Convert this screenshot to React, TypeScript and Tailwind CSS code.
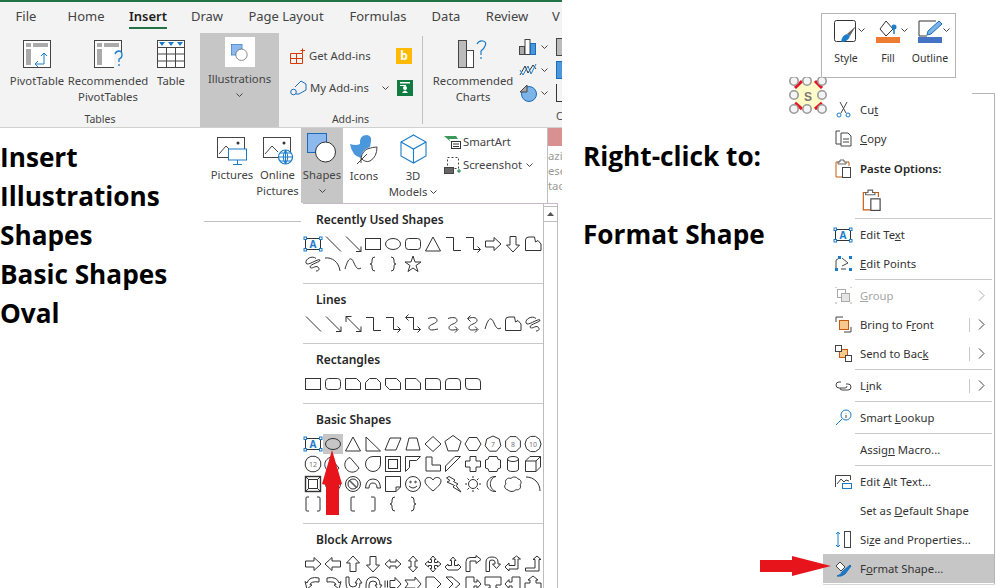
import type { ReactNode } from 'react';

const polygon = (n: number, r = 7.5) =>
  Array.from({ length: n }, (_, i) => {
    const a = (Math.PI * 2 * i) / n - Math.PI / 2 - (n % 2 ? 0 : Math.PI / n);
    return `${(10 + r * Math.cos(a)).toFixed(1)},${(10 + r * Math.sin(a)).toFixed(1)}`;
  }).join(' ');

const numbered = (n: number, label: string) => (
  <>
    <polygon points={polygon(n, 8)} />
    <text x="10" y="12.5" fontSize="7" textAnchor="middle" fill="#777" stroke="none" fontFamily="Noto Sans">{label}</text>
  </>
);

const arrowHead = (x: number, y: number, dir: 'r' | 'l' | 'd' | 'u' | 'dr') => {
  if (dir === 'r') return <path d={`M${x - 3} ${y - 3}L${x} ${y}L${x - 3} ${y + 3}`} />;
  if (dir === 'l') return <path d={`M${x + 3} ${y - 3}L${x} ${y}L${x + 3} ${y + 3}`} />;
  if (dir === 'd') return <path d={`M${x - 3} ${y - 3}L${x} ${y}L${x + 3} ${y - 3}`} />;
  if (dir === 'u') return <path d={`M${x - 3} ${y + 3}L${x} ${y}L${x + 3} ${y + 3}`} />;
  return <path d={`M${x - 5} ${y}H${x}V${y - 5}`} />;
};

// gallery drawings, all in a 20x20 box
const shapes: Record<string, ReactNode> = {
  textbox: (
    <>
      <rect x="2.5" y="4.5" width="15" height="11" stroke="#333" />
      <text x="10" y="14" fontSize="10" fontWeight="700" textAnchor="middle" fill="#1b7cc9" stroke="none" fontFamily="Noto Sans">A</text>
      <g fill="#fff" stroke="#1b7cc9">
        <rect x="1" y="3" width="2.5" height="2.5" />
        <rect x="16.5" y="3" width="2.5" height="2.5" />
        <rect x="1" y="14.5" width="2.5" height="2.5" />
        <rect x="16.5" y="14.5" width="2.5" height="2.5" />
      </g>
    </>
  ),
  line: <path d="M3 2.5L18 17.5" />,
  arrow: <><path d="M3 2.5L18 17.5" />{arrowHead(18, 17.5, 'dr')}</>,
  dbl: <><path d="M3 2.5L18 17.5" />{arrowHead(18, 17.5, 'dr')}<path d="M3 8V2.5H8.5" /></>,
  rect: <rect x="2.5" y="4.5" width="15" height="11" />,
  oval: <ellipse cx="10" cy="10" rx="7.5" ry="5.5" />,
  round: <rect x="2.5" y="4.5" width="15" height="11" rx="3" />,
  tri: <path d="M10 3L17.5 17H2.5Z" />,
  rtri: <path d="M3 3L17.5 17H3Z" />,
  elbow: <path d="M3 3.5H10.5V16.5H18" />,
  elbowA: <><path d="M3 3.5H10.5V15.5H17" />{arrowHead(17.5, 15.5, 'r')}</>,
  elbowD: <><path d="M3 3.5H10.5V15.5H17" />{arrowHead(17.5, 15.5, 'r')}{arrowHead(2.5, 3.5, 'l')}</>,
  curveZ: <path d="M5 4.5C9 3 14 3 14 6.5S6 10 6 13.5S10 16 15 15" />,
  curveA: <><path d="M5 4.5C9 3 14 3 14 6.5S6 10 6 13.5S10 16 14 15.5" />{arrowHead(15, 15.5, 'r')}</>,
  curveD: <><path d="M5 4.5C9 3 14 3 14 6.5S6 10 6 13.5S10 16 14 15.5" />{arrowHead(15, 15.5, 'r')}{arrowHead(4.5, 4.5, 'l')}</>,
  rarrow: <path d="M2.5 7H11V3.5L18 10L11 16.5V13H2.5Z" />,
  larrow: <path d="M17.5 7H9V3.5L2 10L9 16.5V13H17.5Z" />,
  uarrow: <path d="M7 17.5V9H3.5L10 2L16.5 9H13V17.5Z" />,
  darrow: <path d="M7 2.5V11H3.5L10 18L16.5 11H13V2.5Z" />,
  lrarrow: <path d="M2 10L7 5.5V8H13V5.5L18 10L13 14.5V12H7V14.5Z" />,
  udarrow: <path d="M10 2L14.5 7H12V13H14.5L10 18L5.5 13H8V7H5.5Z" />,
  quad: <path d="M10 2L13 5.5H11.5V8.5H14.5V7L18 10L14.5 13V11.5H11.5V14.5H13L10 18L7 14.5H8.5V11.5H5.5V13L2 10L5.5 7V8.5H8.5V5.5H7Z" />,
  lru: <path d="M10 3L13 6.5H11.5V11.5H15V10L18 13L15 16H5V16L2 13L5 10V11.5H8.5V6.5H7Z" />,
  bent: <path d="M3 17.5V7.5Q3 3.5 7 3.5H13V1.5L18 5.5L13 9.5V7H7V17.5Z" />,
  uturn: <path d="M3 17.5V8Q3 3 9 3T15 8V10H17.5L13.5 14.5L9.5 10H12V8Q12 6 9 6T6.5 8V17.5Z" />,
  leftup: <path d="M2 13L6 9V11.5H12V5H9.5L13.5 2L17.5 5H15V15H6V17Z" />,
  bentup: <path d="M2.5 14H12V5.5H10L14 2L18 5.5H16V17H2.5Z" />,
  curveL: <path d="M16 4Q6 2 4 9L2 7.5L4 15L9 11L7 10.5Q8 7 16 8Z" />,
  curveR: <path d="M4 4Q14 2 16 9L18 7.5L16 15L11 11L13 10.5Q12 7 4 8Z" />,
  curveU: <path d="M3 3V9Q3 17 10 17T17 9L19 9L15.5 4L12 9H14Q14 13 10 13T6 9V3Z" />,
  curveD2: <path d="M3 17V11Q3 3 10 3T17 11L19 11L15.5 16L12 11H14Q14 7 10 7T6 11V17Z" />,
  striped: <path d="M2 6.5V13.5M4.5 6.5V13.5M7 6.5H12V3.5L18 10L12 16.5V13.5H7Z" />,
  notched: <path d="M2 6H12V3L18 10L12 17V14H2L5 10Z" />,
  pentarrow: <path d="M3 3H11L18 10L11 17H3Z" />,
  chevron: <path d="M3 3H9L17 10L9 17H3L10 10Z" />,
  callR: <path d="M3 3H11V8H14V5.5L18 10L14 14.5V12H11V17H3Z" />,
  callD: <path d="M2 3H18V11H13V14H15L10 18L5 14H7V11H2Z" />,
  callL: <path d="M17 3H9V8H6V5.5L2 10L6 14.5V12H9V17H17Z" />,
  callU: <path d="M2 17H18V9H13V6H15L10 2L5 6H7V9H2Z" />,
  snip1: <path d="M2.5 4.5H13.5L17.5 8.5V15.5H2.5Z" />,
  snip2: <path d="M6.5 4.5H13.5L17.5 8.5V15.5H2.5V8.5Z" />,
  snip3: <path d="M2.5 4.5H13.5L17.5 8.5V15.5H6.5L2.5 11.5Z" />,
  snip4: <path d="M2.5 4.5H13L17.5 9V15.5H2.5Z" />,
  rsingle: <path d="M2.5 4.5H14Q17.5 4.5 17.5 8V15.5H2.5Z" />,
  rtop: <path d="M6 4.5H14Q17.5 4.5 17.5 8V15.5H2.5V8Q2.5 4.5 6 4.5Z" />,
  rdiag: <path d="M2.5 4.5H14Q17.5 4.5 17.5 8V15.5H6Q2.5 15.5 2.5 12Z" />,
  freeform: <path d="M2.5 16.5V6Q2.5 3 6 3H11.5L12.5 8L15 6.5L18 10V16.5Z" />,
  scribble: <path d="M13 4.5C9 1 2 5 3 9C4 13 15 4 17 6C18 8 7 10 7 13C8 16 13 11 15 13C17 15 16 17 13 17" />,
  arcCurve: <path d="M2 4C9 3 16 8 17 17" />,
  wave: <path d="M2 15C6 1 9 4 11 9S15 16 18 14" />,
  lbrace: <path d="M12 3Q9 3 9 6V8Q9 10 7 10Q9 10 9 12V14Q9 17 12 17" />,
  rbrace: <path d="M8 3Q11 3 11 6V8Q11 10 13 10Q11 10 11 12V14Q11 17 8 17" />,
  lbracket: <path d="M12 3H9Q8 3 8 4V16Q8 17 9 17H12" />,
  rbracket: <path d="M8 3H11Q12 3 12 4V16Q12 17 11 17H8" />,
  dblbracket: <path d="M6 3H4Q3 3 3 4V16Q3 17 4 17H6M14 3H16Q17 3 17 4V16Q17 17 16 17H14" />,
  star: <path d="M10 2L12 8H18L13 11.5L15 17.5L10 14L5 17.5L7 11.5L2 8H8Z" />,
  para: <path d="M7 4H18L13 16H2Z" />,
  trap: <path d="M6 4H14L17 16H3Z" />,
  diamond: <path d="M10 2.5L18 10L10 17.5L2 10Z" />,
  pentagon: <polygon points={polygon(5, 8.5)} />,
  hexagon: <path d="M6 3.5H14L18 10L14 16.5H6L2 10Z" />,
  n7: numbered(7, '7'),
  n8: numbered(8, '8'),
  n10: numbered(10, '10'),
  n12: numbered(12, '12'),
  chord: <path d="M7 3.5A7.5 7.5 0 1 0 16 14Z" />,
  tear: <path d="M17.5 2.5V10A7.5 7.5 0 1 1 10 2.5Z" />,
  frame: <><rect x="2.5" y="2.5" width="15" height="15" /><rect x="5.5" y="5.5" width="9" height="9" /></>,
  half: <path d="M2.5 17.5V2.5H17.5L13.5 6.5H6.5V13.5Z" />,
  lshape: <path d="M3 3H9V11H17.5V17H3Z" />,
  diag: <path d="M2.5 12L12 2.5H17.5L2.5 17.5Z" />,
  plus: <path d="M7 2.5H13V7H17.5V13H13V17.5H7V13H2.5V7H7Z" />,
  plaque: <path d="M6 2.5H14Q14 6 17.5 6V14Q14 14 14 17.5H6Q6 14 2.5 14V6Q6 6 6 2.5Z" />,
  can: <><path d="M4.5 5V15Q4.5 17.5 10 17.5T15.5 15V5" /><ellipse cx="10" cy="5" rx="5.5" ry="2.5" /></>,
  cube: <path d="M2.5 7L7 2.5H17.5V13L13 17.5H2.5ZM2.5 7H13V17.5M13 7L17.5 2.5" />,
  bevel: <><rect x="2.5" y="2.5" width="15" height="15" strokeWidth="1.4" /><rect x="5.5" y="5.5" width="9" height="9" /><path d="M2.5 2.5L5.5 5.5M17.5 2.5L14.5 5.5M2.5 17.5L5.5 14.5M17.5 17.5L14.5 14.5" /></>,
  no: <><circle cx="10" cy="10" r="7.5" /><circle cx="10" cy="10" r="5" /><path d="M6.5 6L14 13.5M6 6.5L13.5 14" /></>,
  block: <path d="M2.5 14Q3 5 10 5T17.5 14H14Q14 9 10 9T6 14Z" />,
  folded: <path d="M2.5 2.5H17.5V13L13 17.5H2.5ZM13 17.5V13H17.5" />,
  smile: <><circle cx="10" cy="10" r="7.5" /><circle cx="7.5" cy="8" r=".8" /><circle cx="12.5" cy="8" r=".8" /><path d="M6 12Q10 16 14 12" /></>,
  heart: <path d="M10 17C4 12 2 9.5 2 7C2 3 8 2 10 6C12 2 18 3 18 7C18 9.5 16 12 10 17Z" />,
  bolt: <path d="M6 2.5L12 6L10.5 7.5L15 10L13 11.5L18 18L10 13L11.5 11.5L4 8L7 6.5L3.5 4Z" />,
  sun: <><circle cx="10" cy="10" r="4.5" /><path d="M10 2V4M10 16V18M2 10H4M16 10H18M4.5 4.5L6 6M14 14L15.5 15.5M4.5 15.5L6 14M14 6L15.5 4.5" /></>,
  moon: <path d="M13 2.5C6 4 5 15 13 17.5C8 18 4 14 4 10S8 2 13 2.5Z" />,
  cloud: <path d="M5 16C1 15 1 11 3 10C1 6 5 3 8 4.5C10 2 14 3 15 5C18 5 19 9 17 11C19 14 15 17 13 15.5C11 18 7 18 5 16Z" />,
  arc: <path d="M3 3C11 3 17 9 17 17" />,
};

const Shape = ({ name, active }: { name: string; active?: boolean }) => (
  <div className={`w-[20px] h-[20px] ${active ? 'bg-[#c6c6c6]' : ''}`}>
    {name && (
      <svg width="20" height="20" viewBox="0 0 20 20" fill="none" stroke="#333" strokeWidth="1">
        {shapes[name]}
      </svg>
    )}
  </div>
);

const GallerySection = ({ title, rows, last }: { title: string; rows: string[][]; last?: boolean }) => (
  <div className={`pt-[6px] pb-[9px] ${last ? '' : 'border-b border-[#c8c8c8]'}`}>
    <div className="h-[20px] leading-[20px] pl-[13px] text-[12px] font-semibold text-[#262626]">{title}</div>
    <div className="mt-[4px]">
      {rows.map((row, i) => (
        <div key={i} className="flex">
          {row.map((name, j) => (
            <Shape key={j} name={name} active={title === 'Basic Shapes' && i === 0 && j === 1} />
          ))}
        </div>
      ))}
    </div>
  </div>
);

const Chevron = ({ className = '' }: { className?: string }) => (
  <svg width="7" height="5" viewBox="0 0 7 5" fill="none" stroke="#444" strokeWidth="1" className={className}>
    <path d="M.5 .5L3.5 3.5L6.5 .5" />
  </svg>
);

const RibbonButton = ({ w, icon, lines, labelGap = 5 }: { w: number; icon: ReactNode; lines: ReactNode[]; labelGap?: number }) => (
  <div className="flex flex-col items-center shrink-0" style={{ width: w }}>
    <div className="h-[28px] flex items-center justify-center">{icon}</div>
    <div className="leading-[16px] text-center whitespace-nowrap flex flex-col items-center" style={{ marginTop: labelGap }}>
      {lines.map((l, i) => (
        <div key={i} className="h-[16px] flex items-center">{l}</div>
      ))}
    </div>
  </div>
);

const TableGrid = ({ q }: { q?: boolean }) => (
  <svg width="28" height="28" viewBox="0 0 28 28" fill="none" className="overflow-visible">
    <rect x=".5" y=".5" width="27" height="27" stroke="#444" fill="#fff" />
    <rect x="3" y="3" width="5" height="4" fill="#aaa" />
    <rect x="10" y="3" width="15" height="4" fill="#aaa" />
    <rect x="3" y="9" width="5" height="16" fill="#aaa" />
    {q ? (
      <>
        <rect x="20" y="12" width="10" height="16" fill="#f3f3f3" />
        <path d="M21 14Q22 11 25 11T28 15Q28 18 25 19V22M25 24V26" stroke="#1b7cc9" strokeWidth="1.3" />
      </>
    ) : (
      <path d="M13 24H21V13M18 16L21 13L24 16M15 21L12 24L15 27" stroke="#1b7cc9" />
    )}
  </svg>
);

const TableIcon = () => (
  <svg width="28" height="28" viewBox="0 0 28 28" fill="#fff" stroke="#444">
    <rect x=".5" y=".5" width="27" height="27" />
    <path d="M.5 7.5H27.5M.5 14H27.5M.5 21H27.5M9.5 7V27M18.5 7V27" fill="none" />
    <path d="M2 2H8L5 6ZM11 2H17L14 6ZM20 2H26L23 6Z" fill="#1b7cc9" stroke="none" />
  </svg>
);

const ShapesGlyph = ({ size }: { size: number }) => (
  <svg width={size} height={size} viewBox="0 0 30 30">
    <rect x=".5" y=".5" width="19" height="19" fill="#8db9ee" stroke="#1b6cb8" />
    <circle cx="18.5" cy="19" r="10" fill="#fff" stroke="#333" />
  </svg>
);

const PictureBase = () => (
  <>
    <rect x=".5" y=".5" width="27" height="20" fill="#fff" stroke="#444" />
    <path d="M2 17L9 9L15 15" fill="none" stroke="#444" />
    <circle cx="21" cy="6" r="1.5" fill="#333" />
  </>
);

const PicturesIcon = () => (
  <svg width="30" height="28" viewBox="0 0 30 28" fill="none">
    <PictureBase />
    <rect x="11.5" y="12" width="18" height="11" fill="#fff" stroke="#1b7cc9" />
    <path d="M20.5 23V27M16 27.5H25" stroke="#1b7cc9" />
  </svg>
);

const OnlinePicturesIcon = () => (
  <svg width="30" height="28" viewBox="0 0 30 28" fill="none">
    <PictureBase />
    <circle cx="22.5" cy="20" r="7" fill="#fff" stroke="#1b7cc9" strokeWidth="1.2" />
    <path d="M15.5 20H29.5M22.5 13V27M17 16H28M17 24H28M22.5 13Q18 20 22.5 27Q27 20 22.5 13" stroke="#1b7cc9" />
  </svg>
);

const IconsIcon = () => (
  <svg width="30" height="30" viewBox="0 0 30 30">
    <path d="M1 10Q7 12 11 10Q10 1 18 1Q23 2 22 7L21 13Q12 16 12 24Q3 22 1 10Z" fill="#4b97dc" />
    <path d="M12 29Q11 19 18 15Q24 13 28 13Q28 23 21 27Q16 29 12 24M8 30L18 20" fill="#fff" stroke="#444" />
  </svg>
);

const CubeIcon = () => (
  <svg width="27" height="30" viewBox="0 0 27 30" fill="#fff" stroke="#1b7cc9" strokeWidth="1.1">
    <path d="M13.5 1L26 8V22L13.5 29L1 22V8Z" />
    <path d="M1 8L13.5 15L26 8M13.5 15V29" fill="none" />
  </svg>
);

const AddinGet = () => (
  <svg width="16" height="16" viewBox="0 0 16 16" fill="none" stroke="#d83b01">
    <path d="M.5 5.5H12.5V15.5H.5ZM6.5 5.5V15.5M.5 10.5H12.5M12.5 .5V5M10.5 2.5H15" />
  </svg>
);

const AddinMy = () => (
  <svg width="17" height="16" viewBox="0 0 17 16" fill="none" stroke="#1b6cb8">
    <path d="M5 7L11 1L16 4V10L9 14H6" />
    <circle cx="3.5" cy="12" r="2.8" />
  </svg>
);

const SmallChart = ({ kind }: { kind: 'bar' | 'line' | 'pie' }) => (
  <svg width="18" height="18" viewBox="0 0 18 18" fill="none">
    {kind === 'bar' && (
      <>
        <rect x=".5" y="8.5" width="5" height="8" fill="#aaa" stroke="#444" />
        <rect x="6" y="1.5" width="5" height="15" fill="#fff" stroke="#444" />
        <rect x="11.5" y="5.5" width="5" height="11" fill="#4b97dc" stroke="#1b6cb8" />
      </>
    )}
    {kind === 'line' && (
      <>
        <path d="M1 14L6 5L9 12L14 4L17 8" stroke="#333" />
        <path d="M1 9L4 14L9 5L12 13L17 3" stroke="#1b7cc9" />
      </>
    )}
    {kind === 'pie' && (
      <>
        <circle cx="10" cy="10" r="7.5" fill="#7db4e8" stroke="#1b6cb8" />
        <path d="M1 8L8 1V8Z" fill="#aaa" stroke="#444" />
      </>
    )}
  </svg>
);

const Tab = ({ w, label, active }: { w: number; label: string; active?: boolean }) => (
  <div className="relative shrink-0 text-center h-full leading-[29px] whitespace-nowrap flex justify-center" style={{ width: w }}>
    <span className={`relative inline-block h-[29px] ${active ? 'font-semibold text-[#1d1d1d]' : ''}`}>
      {label}
      {active && <span className="absolute left-0 right-0 top-[25px] h-[2px] bg-[#217346]" />}
    </span>
  </div>
);

const Ribbon = () => (
  <div className="h-[128px] bg-[#f3f3f3] border-t-2 border-[#217346] border-b border-b-[#d0d0d0] overflow-hidden">
    <div className="flex h-[31px] text-[13px] text-[#444]">
      <Tab w={52} label="File" />
      <Tab w={68} label="Home" />
      <Tab w={56} label="Insert" active />
      <Tab w={62} label="Draw" />
      <Tab w={96} label="Page Layout" />
      <Tab w={88} label="Formulas" />
      <Tab w={48} label="Data" />
      <Tab w={74} label="Review" />
      <Tab w={24} label="V" />
    </div>
    <div className="flex h-[94px]">
      {/* Tables */}
      <div className="w-[200px] shrink-0 flex flex-col pt-[7px]">
        <div className="flex h-[71px]">
          <RibbonButton w={74} icon={<TableGrid />} lines={['PivotTable']} />
          <RibbonButton w={68} icon={<TableGrid q />} lines={['Recommended', 'PivotTables']} />
          <RibbonButton w={58} icon={<TableIcon />} lines={['Table']} />
        </div>
        <div className="text-center leading-[16px] text-[10.5px]">Tables</div>
      </div>
      {/* Illustrations */}
      <div className="w-[79px] shrink-0 bg-[#c6c6c6] flex flex-col items-center pt-[4px]">
        <div className="w-[30px] h-[30px] bg-white flex items-center justify-center">
          <ShapesGlyph size={17} />
        </div>
        <div className="mt-[4px] leading-[16px]">Illustrations</div>
        <Chevron className="mt-[6px]" />
      </div>
      {/* Add-ins */}
      <div className="w-[143px] shrink-0 flex flex-col pt-[15px] relative">
        <div className="flex items-center h-[16px] pl-[11px]">
          <AddinGet />
          <span className="ml-[3px] w-[87px]">Get Add-ins</span>
          <div className="w-[16px] h-[16px] bg-[#ffb900] flex items-center justify-center text-[12px] leading-[16px] font-bold text-[#ffffff]">b</div>
        </div>
        <div className="flex items-center h-[16px] pl-[11px] mt-[16px]">
          <AddinMy />
          <span className="ml-[3px] w-[72px]">My Add-ins</span>
          <Chevron className="mr-[8px]" />
          <div className="w-[16px] h-[16px] bg-[#107c41] flex items-center justify-center">
            <svg width="10" height="12" viewBox="0 0 10 12" fill="#fff"><circle cx="5" cy="6" r="2" /><path d="M2 11Q5 6 8 11ZM0 0H10V1.5H0ZM0 3H6V4H0Z" /></svg>
          </div>
        </div>
        <div className="mt-[15px] text-center leading-[16px] text-[10.5px]">Add-ins</div>
      </div>
      <div className="w-px h-[88px] mt-[3px] bg-[#c0c0c0] shrink-0" />
      {/* Charts */}
      <div className="flex pt-[5px] shrink-0">
        <div className="pt-[2px] ml-[2px]">
          <RibbonButton w={96} icon={
            <svg width="30" height="28" viewBox="0 0 30 28" fill="none">
              <rect x=".5" y=".5" width="8" height="27" fill="#bbb" stroke="#444" />
              <rect x="8.5" y="10.5" width="7" height="17" fill="#fff" stroke="#444" />
              <path d="M19 4Q21 0 25 1T27 6Q26 9 23 11V15M23 17V19" stroke="#1b7cc9" strokeWidth="1.2" />
            </svg>
          } lines={['Recommended', 'Charts']} />
        </div>
        <div className="flex flex-col gap-[5px] ml-[-2px]">
          {(['bar', 'line', 'pie'] as const).map((k) => (
            <div key={k} className="flex items-center h-[18px]">
              <SmallChart kind={k} />
              <Chevron className="ml-[4px]" />
            </div>
          ))}
        </div>
        <div className="ml-[8px] flex flex-col gap-[5px]">
          <div className="w-[14px] h-[18px] bg-[#bbb] border border-[#444]" />
          <div className="w-[14px] h-[18px] bg-[#4b97dc] border border-[#1b6cb8]" />
          <div className="w-[14px] h-[18px] border-l border-b border-[#333]" />
          <div className="text-[10.5px] leading-[16px] mt-[1px]">C</div>
        </div>
      </div>
    </div>
  </div>
);

const headingClass = "font-['Open_Sans',sans-serif] font-bold text-[26.2px] leading-[39px] text-black";

const ShapeGallery = () => (
  <div className="ml-[2px] w-[255px] h-[385px] overflow-hidden border-t border-[#c8b8c8] flex bg-white">
    <div className="w-[240px] shrink-0">
      <GallerySection
        title="Recently Used Shapes"
        rows={[
          ['textbox', 'line', 'arrow', 'rect', 'oval', 'round', 'tri', 'elbow', 'elbowA', 'rarrow', 'darrow', 'freeform'],
          ['scribble', 'arcCurve', 'wave', 'lbrace', 'rbrace', 'star'],
        ]}
      />
      <GallerySection
        title="Lines"
        rows={[['line', 'arrow', 'dbl', 'elbow', 'elbowA', 'elbowD', 'curveZ', 'curveA', 'curveD', 'wave', 'freeform', 'scribble']]}
      />
      <GallerySection
        title="Rectangles"
        rows={[['rect', 'round', 'snip1', 'snip2', 'snip3', 'snip4', 'rsingle', 'rtop', 'rdiag']]}
      />
      <GallerySection
        title="Basic Shapes"
        rows={[
          ['textbox', 'oval', 'tri', 'rtri', 'para', 'trap', 'diamond', 'pentagon', 'hexagon', 'n7', 'n8', 'n10'],
          ['n12', 'chord', 'chord', 'tear', 'frame', 'half', 'lshape', 'diag', 'plus', 'plaque', 'can', 'cube'],
          ['bevel', 'no', 'no', 'block', 'folded', 'smile', 'heart', 'bolt', 'sun', 'moon', 'cloud', 'arc'],
          ['dblbracket', '', 'lbracket', 'rbracket', 'lbrace', 'rbrace'],
        ]}
      />
      <GallerySection
        last
        title="Block Arrows"
        rows={[
          ['rarrow', 'larrow', 'uarrow', 'darrow', 'lrarrow', 'udarrow', 'quad', 'lru', 'bent', 'uturn', 'leftup', 'bentup'],
          ['curveL', 'curveR', 'curveU', 'curveD2', 'striped', 'notched', 'pentarrow', 'chevron', 'callR', 'callD', 'callL', 'callU'],
        ]}
      />
    </div>
    {/* scrollbar */}
    <div className="w-[15px] shrink-0 border-l border-r border-[#bdbdbd] pt-[2px]">
      <div className="h-[16px] border-y border-[#bdbdbd] flex items-center justify-center">
        <svg width="7" height="4" viewBox="0 0 7 4"><path d="M0 4L3.5 0L7 4Z" fill="#555" /></svg>
      </div>
    </div>
  </div>
);

const IllustrationsPanel = () => (
  <div className="flex w-[358px] shrink-0">
    <div className="w-[97px] h-[94px] shrink-0 border-b border-[#c0c0c0] flex pt-[9px]">
      <RibbonButton w={56} labelGap={2} icon={<PicturesIcon />} lines={['Pictures']} />
      <RibbonButton w={35} labelGap={2} icon={<OnlinePicturesIcon />} lines={['Online', 'Pictures']} />
    </div>
    <div className="w-[261px] shrink-0">
      <div className="flex h-[75px]">
        <div className="w-[42px] bg-[#c6c6c6] flex flex-col items-center pt-[5px] shrink-0">
          <div className="h-[32px]"><ShapesGlyph size={30} /></div>
          <div className="mt-[2px] leading-[16px]">Shapes</div>
          <Chevron className="mt-[6px]" />
        </div>
        <div className="pt-[7px]">
          <RibbonButton w={42} icon={<IconsIcon />} lines={['Icons']} />
        </div>
        <div className="pt-[7px]">
          <RibbonButton w={56} icon={<CubeIcon />} lines={['3D', <span key="m" className="flex items-center gap-[3px]">Models<Chevron /></span>]} />
        </div>
        <div className="w-[106px] pt-[6px] pl-[3px] shrink-0">
          <div className="flex items-center h-[16px] gap-[2px]">
            <svg width="17" height="13" viewBox="0 0 17 13" fill="none">
              <path d="M0 0H12L14 3H5L7 6Z" fill="#3b9a5b" />
              <rect x="7.5" y="5.5" width="9" height="7" stroke="#333" />
              <path d="M9 8H15M9 10.5H15" stroke="#333" />
            </svg>
            <span>SmartArt</span>
          </div>
          <div className="flex items-center h-[16px] gap-[2px] mt-[7px]">
            <svg width="17" height="17" viewBox="0 0 17 17" fill="none">
              <rect x="3.5" y=".5" width="11" height="11" stroke="#444" strokeDasharray="2 2" />
              <rect x=".5" y="10.5" width="9" height="6" fill="#666" stroke="#444" />
              <path d="M13 14H17M15 12V16" stroke="#107c41" />
            </svg>
            <span>Screenshot</span>
            <Chevron className="ml-[2px]" />
          </div>
        </div>
        {/* edge of the worksheet behind the panel */}
        <div className="w-[15px] shrink-0 border-l border-[#c0c0c0] overflow-hidden text-[#9a9a9a] leading-[15px]">
          <div className="h-[18px] bg-[#d89090]" />
          <div className="mt-[2px]">azi</div>
          <div>ese</div>
          <div>tac</div>
        </div>
      </div>
      <ShapeGallery />
    </div>
  </div>
);

type MenuEntry = {
  icon?: ReactNode;
  parts?: [string, string, string];
  arrow?: 'split' | 'plain';
  disabled?: boolean;
  active?: boolean;
};

const Sep = () => <div className="my-px h-px ml-[32px] mr-[2px] bg-[#c8c8c8]" />;

const MenuRow = ({ icon, parts, arrow, disabled, active }: MenuEntry) => (
  <div className={`h-[29px] flex items-center pr-[2px] ${active ? 'bg-[#c6c6c6]' : ''} ${disabled ? 'text-[#a6a6a6]' : 'text-[#333]'}`}>
    <div className="w-[37px] shrink-0 flex justify-center pl-[3px]">{icon}</div>
    <div className="flex-1 whitespace-nowrap pt-[1px]">
      {parts && <>{parts[0]}<u>{parts[1]}</u>{parts[2]}</>}
    </div>
    {arrow === 'split' && <div className="w-px h-[14px] bg-[#c8c8c8] mr-[8px]" />}
    {arrow && (
      <svg width="7" height="11" viewBox="0 0 7 11" fill="none" stroke={disabled ? '#aaa' : '#444'} className="mr-[7px]">
        <path d="M1 .5L6 5.5L1 10.5" />
      </svg>
    )}
  </div>
);

const I = ({ children, w = 17, h = 17 }: { children: ReactNode; w?: number; h?: number }) => (
  <svg width={w} height={h} viewBox={`0 0 ${w} ${h}`} fill="none" stroke="#444">{children}</svg>
);

const ClipboardIcon = ({ size = 17 }: { size?: number }) => (
  <svg width={size} height={size + 2} viewBox="0 0 17 19" fill="none">
    <path d="M5 3H1V18H7" stroke="#c55a11" />
    <path d="M5 3V1H9V3H11V5H3V3Z" stroke="#666" fill="#fff" />
    <path d="M11 3H14V7" stroke="#c55a11" />
    <rect x="7.5" y="8.5" width="8" height="10" fill="#fff" stroke="#444" />
  </svg>
);

const ContextMenu = () => (
  <div className="ml-[2px] w-[172px] relative text-[11.3px]">
    <div className="h-px w-[23px] ml-auto bg-[#b4b4b4]" />
    <div className="border-r border-[#b4b4b4] pt-[1px] pb-[1px]">
      <MenuRow
        parts={['Cu', 't', '']}
        icon={<I><path d="M5 1L11 12M12 1L6 12" /><circle cx="4" cy="14" r="2" stroke="#1b7cc9" /><circle cx="13" cy="14" r="2" stroke="#1b7cc9" /></I>}
      />
      <MenuRow
        parts={['', 'C', 'opy']}
        icon={<I><path d="M5 1H1V14H6" /><path d="M6 3H13L16 6V16H6Z" fill="#fff" /><path d="M8 9H14M8 12H14" /></I>}
      />
      <div className="h-[31px] flex items-center">
        <div className="w-[37px] shrink-0 flex justify-center pl-[3px]"><ClipboardIcon /></div>
        <span className="font-semibold text-[11.5px] text-[#262626]">Paste Options:</span>
      </div>
      <div className="h-[33px] pl-[39px] pt-[5px]"><ClipboardIcon size={20} /></div>
      <Sep />
      <MenuRow
        parts={['Edit Te', 'x', 't']}
        icon={<svg width="20" height="20" viewBox="0 0 20 20" fill="none">{shapes.textbox}</svg>}
      />
      <MenuRow
        parts={['', 'E', 'dit Points']}
        icon={<I><path d="M1 14V6Q1 4 3 4M6 14H11M7 3L13 8L7 11" stroke="#444" /><g fill="#1b7cc9" stroke="none"><rect x="0" y="13" width="3" height="3" /><rect x="14" y="1" width="3" height="3" /><rect x="14" y="13" width="3" height="3" /><rect x="3" y="1" width="3" height="3" /></g></I>}
      />
      <Sep />
      <MenuRow
        disabled
        arrow="plain"
        parts={['', 'G', 'roup']}
        icon={<I><g stroke="#aaa"><rect x="2.5" y="2.5" width="8" height="8" /><rect x="6.5" y="6.5" width="8" height="8" fill="#e5e5e5" /><path d="M0 0H2M15 0H17M0 16H2M15 16H17" /></g></I>}
      />
      <MenuRow
        arrow="split"
        parts={['Bring to F', 'r', 'ont']}
        icon={<I><path d="M1 6V1H8M16 11V16H9" /><rect x="4.5" y="4.5" width="9" height="9" fill="#f8c98c" stroke="#c55a11" /></I>}
      />
      <MenuRow
        arrow="split"
        parts={['Send to Bac', 'k', '']}
        icon={<I><rect x="4.5" y="4.5" width="8" height="8" fill="#f8c98c" stroke="#c55a11" /><rect x=".5" y=".5" width="6" height="6" fill="#fff" /><rect x="10.5" y="10.5" width="6" height="6" fill="#fff" /></I>}
      />
      <Sep />
      <MenuRow
        arrow="split"
        parts={['L', 'i', 'nk']}
        icon={<I><path d="M6 5H4Q1 5 1 8T4 11H10Q12 11 12 9" /><path d="M11 7H13Q16 7 16 10T13 13H7Q5 13 5 11" /></I>}
      />
      <Sep />
      <MenuRow
        parts={['Smart ', 'L', 'ookup']}
        icon={<I><circle cx="11" cy="6" r="5" stroke="#1b7cc9" /><path d="M7 10L1 16" stroke="#1b7cc9" /><path d="M11 4V4.5M11 6V9" stroke="#444" /></I>}
      />
      <Sep />
      <MenuRow parts={['Assig', 'n', ' Macro...']} />
      <Sep />
      <MenuRow
        parts={['Edit ', 'A', 'lt Text...']}
        icon={<I><path d="M.5 14V2.5H15.5V7" /><path d="M2 11L6 6L9 9L11 7L14 8" /><rect x="7.5" y="10.5" width="9" height="5" stroke="#1b7cc9" fill="#fff" /></I>}
      />
      <MenuRow parts={['Set as ', 'D', 'efault Shape']} />
      <MenuRow
        parts={['Si', 'z', 'e and Properties...']}
        icon={<I><path d="M3 1V16M1 3L3 1L5 3M1 14L3 16L5 14" stroke="#1b7cc9" /><rect x="9.5" y=".5" width="6" height="16" /></I>}
      />
      <MenuRow
        active
        parts={['F', 'o', 'rmat Shape...']}
        icon={<I><path d="M1 6L5 2L10 7L6 11Z" fill="#fff" /><path d="M7 12L15 5L16 6L10 14Q6 17 2 16Q6 15 7 12Z" fill="#1b7cc9" stroke="#1b6cb8" /></I>}
      />
    </div>
    <div className="h-px bg-[#d8d8d8]" />
  </div>
);

const MiniToolbar = () => (
  <div className="mt-[13px] w-[135px] h-[65px] border border-[#b4b4b4] pl-[3px] grid grid-cols-[42px_42px_42px] bg-white">
    {[
      {
        label: 'Style',
        icon: (
          <svg width="23" height="23" viewBox="0 0 23 23" fill="none">
            <rect x=".5" y=".5" width="21" height="21" rx="2" stroke="#333" />
            <path d="M22 6L13 14L16 16Z" fill="#666" />
            <path d="M13 14Q8 15 7 22Q14 22 16 16Z" fill="#1b7cc9" />
          </svg>
        ),
      },
      {
        label: 'Fill',
        icon: (
          <svg width="24" height="24" viewBox="0 0 24 24" fill="none">
            <path d="M10 1L17 9L10 16L4 9Z" fill="#fff" stroke="#333" />
            <circle cx="18" cy="7" r="2.5" fill="#1b7cc9" />
            <path d="M18 7V14" stroke="#1b7cc9" strokeWidth="1.5" />
            <rect y="17" width="24" height="6" fill="#ed7d31" />
          </svg>
        ),
      },
      {
        label: 'Outline',
        icon: (
          <svg width="24" height="24" viewBox="0 0 24 24" fill="none">
            <path d="M18 1H1V16H9" stroke="#333" />
            <path d="M21 1L24 4L13 14L9 15L10 11Z" fill="#7db4e8" stroke="#1b6cb8" />
            <rect y="17" width="24" height="6" fill="#4472c4" />
          </svg>
        ),
      },
    ].map((b) => (
      <div key={b.label} className="flex flex-col items-center pt-[6px]">
        <div className="h-[24px] self-start flex items-start gap-[1px] pl-[9px]">
          {b.icon}
          <Chevron className="mt-[8px]" />
        </div>
        <div className="mt-[6px] text-[10.5px] leading-[16px] text-[#333]">{b.label}</div>
      </div>
    ))}
  </div>
);

// the small selected octagon with its handles
const SelectedShape = () => (
  <svg width="38" height="38" viewBox="0 0 38 38" className="absolute left-[789px] top-[77px]">
    <path d="M13 4H26L33 11V26L26 32H13L6 26V11Z" fill="#fffbc8" />
    <path d="M6 11L13 4M26 4L33 11M6 26L13 32M26 32L33 26" stroke="#e81123" strokeWidth="3" />
    <g fill="#f4f4f4" stroke="#999" strokeWidth="1.6">
      {[[5, 4], [18, 4], [33, 4], [5, 18], [33, 18], [5, 32], [18, 32], [33, 32]].map(([x, y]) => (
        <circle key={`${x}-${y}`} cx={x} cy={y} r="4.2" />
      ))}
    </g>
    <text x="19" y="24" fontSize="12" fontWeight="700" textAnchor="middle" fill="#777" fontFamily="Liberation Sans">S</text>
  </svg>
);

export default function App() {
  return (
    <div className="relative w-[1000px] h-[588px] overflow-hidden bg-white flex font-['Noto_Sans',sans-serif] text-[11.3px] text-[#444]">
      <div className="w-[562px] shrink-0 flex flex-col">
        <Ribbon />
        <div className="flex">
          <div className={`w-[204px] shrink-0 pt-[10px] ${headingClass}`}>
            <div>Insert</div>
            <div>Illustrations</div>
            <div>Shapes</div>
            <div>Basic Shapes</div>
            <div>Oval</div>
          </div>
          <IllustrationsPanel />
        </div>
      </div>
      <div className={`w-[259px] shrink-0 pl-[21px] pt-[137px] ${headingClass}`}>
        <div>Right-click to:</div>
        <div className="mt-[39px]">Format Shape</div>
      </div>
      <div className="w-[179px] shrink-0 flex flex-col">
        <MiniToolbar />
        <div className="h-[15px]" />
        <ContextMenu />
      </div>
      <SelectedShape />
      {/* red call-out arrows */}
      <svg width="24" height="66" viewBox="0 0 24 66" className="absolute left-[321px] top-[450px]">
        <path d="M11 0L21 34L18 35V65H5V35L1 34Z" fill="#e8141c" />
      </svg>
      <svg width="72" height="22" viewBox="0 0 72 22" className="absolute left-[760px] top-[555px]">
        <path d="M0 5H32V1L71 11L32 21V17H0Z" fill="#e8141c" />
      </svg>
    </div>
  );
}
